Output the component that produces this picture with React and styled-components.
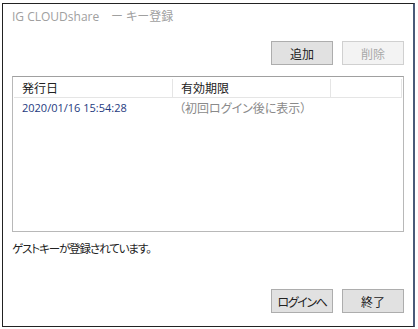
import React from 'react'
import styled, { createGlobalStyle } from 'styled-components'

const GlobalStyle = createGlobalStyle`
  html, body {
    margin: 0;
    padding: 0;
    background: #fff;
  }
  body {
    font-family: "Noto Sans CJK JP", "Liberation Sans", sans-serif;
    font-feature-settings: "palt";
  }
`;

const Page = styled.div`
  width: 418px;
  height: 329px;
  padding: 3px 3px 2px 2px;
  box-sizing: border-box;
`;

const Window = styled.div`
  width: 100%;
  height: 100%;
  box-sizing: border-box;
  border-left: 1px solid #222;
  border-top: 1px solid #222;
  border-bottom: 1px solid #222;
  border-right: 2px solid #4a5a78;
  background: #fff;
  display: flex;
  flex-direction: column;
  padding: 5px 9px 13px 9px;
`;

const Title = styled.div`
  font-family: "Open Sans", "Noto Sans CJK JP", sans-serif;
  font-size: 12px;
  color: #a0a0a0;
  height: 16px;
  line-height: 16px;
  white-space: pre;
`;

const ButtonRow = styled.div`
  display: flex;
  justify-content: flex-end;
  gap: 9px;
  margin-top: ${props => props.top || 0}px;
`;

const Button = styled.button`
  width: 62px;
  height: 24px;
  box-sizing: border-box;
  font-family: "Noto Sans CJK JP", sans-serif;
  font-feature-settings: "palt";
  font-size: 12px;
  letter-spacing: ${props => props.tight ? -1.4 : 0}px;
  padding: 0;
  border: 1px solid ${props => props.disabled ? '#d0d0d0' : '#adadad'};
  background: ${props => props.disabled ? '#f3f3f3' : '#e1e1e1'};
  color: ${props => props.disabled ? '#a8a8a8' : '#222'};
`;

const List = styled.div`
  margin-top: 11px;
  height: 156px;
  box-sizing: border-box;
  border: 1px solid #b8b8b8;
  border-top-color: #a0a0a0;
  padding: 2px 1px;
`;

const HeaderRow = styled.div`
  display: grid;
  grid-template-columns: 159px 158px 1fr;
  height: 18px;
  border-bottom: 1px solid #e5e5e5;
`;

const HeaderCell = styled.div`
  font-size: 12px;
  color: #222;
  line-height: 17px;
  padding-left: 8px;
  border-right: 1px solid #e5e5e5;
`;

const DataRow = styled.div`
  display: grid;
  grid-template-columns: 159px 158px 1fr;
  height: 18px;
  margin-top: 1px;
`;

const Cell = styled.div`
  font-size: ${props => props.muted ? 12 : 11}px;
  line-height: 18px;
  padding-left: ${props => props.pad || 8}px;
  color: ${props => props.muted ? '#8a8a8a' : '#1e3a80'};
  font-family: ${props => props.muted ? '"Noto Sans CJK JP", sans-serif' : '"Open Sans", "Noto Sans CJK JP", sans-serif'};
`;

const Status = styled.div`
  margin-top: 8px;
  font-size: 11.5px;
  letter-spacing: -1.1px;
  color: #222;
  line-height: 16px;
`;

export default function App() {
  return (
    <>
      <GlobalStyle />
      <Page>
        <Window>
          <Title>IG CLOUDshare　ー キー登録</Title>
          <ButtonRow top={16}>
            <Button>追加</Button>
            <Button disabled>削除</Button>
          </ButtonRow>
          <List>
            <HeaderRow>
              <HeaderCell>発行日</HeaderCell>
              <HeaderCell>有効期限</HeaderCell>
              <HeaderCell />
            </HeaderRow>
            <DataRow>
              <Cell>2020/01/16 15:54:28</Cell>
              <Cell muted pad={6}>（初回ログイン後に表示）</Cell>
              <Cell />
            </DataRow>
          </List>
          <Status>ゲストキーが登録されています。</Status>
          <ButtonRow top={33}>
            <Button tight>ログインへ</Button>
            <Button>終了</Button>
          </ButtonRow>
        </Window>
      </Page>
    </>
  )
}
